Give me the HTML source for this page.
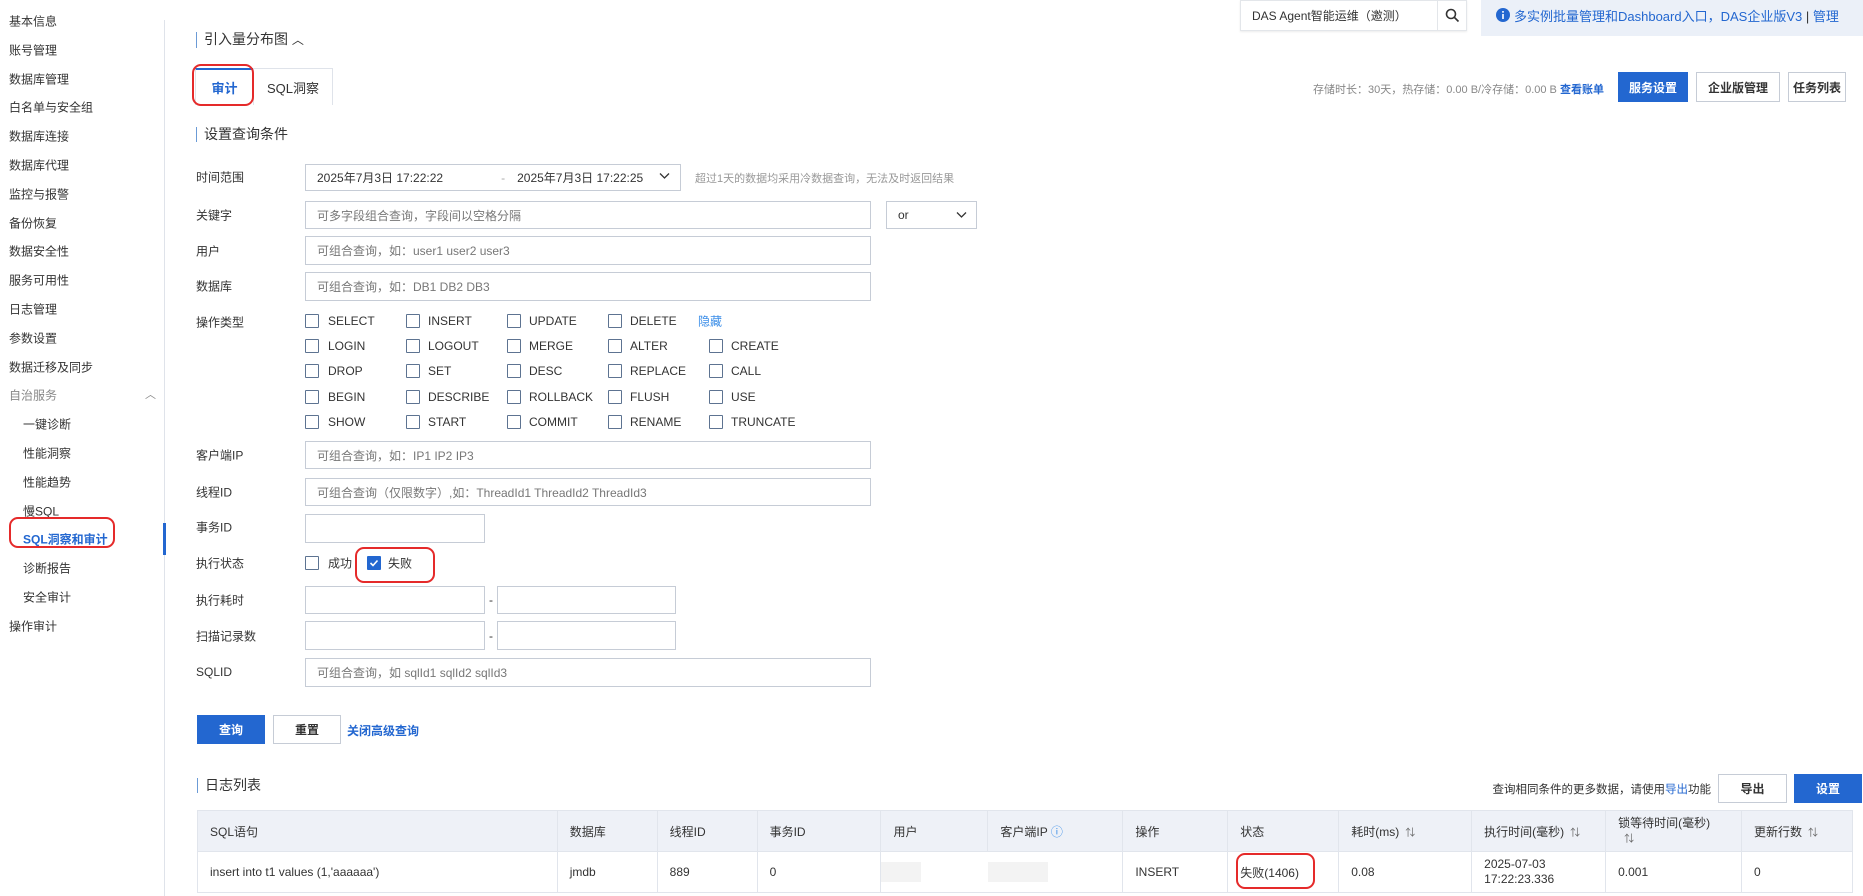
<!DOCTYPE html>
<html><head><meta charset="utf-8">
<style>
*{box-sizing:border-box;margin:0;padding:0}
body{width:1863px;height:896px;overflow:hidden;background:#fff;font-family:"Liberation Sans","Noto Sans CJK SC",sans-serif;font-size:12px;color:#333;position:relative}
.a{position:absolute;white-space:nowrap}
.sb{position:absolute;left:9px;font-size:12px;color:#333;transform:translateY(-50%)}
.sub{left:23px}
.lbl{position:absolute;left:196px;transform:translateY(-50%);font-size:12px;color:#333}
.inp{position:absolute;border:1px solid #c6ccd6;background:#fff;color:#777;padding-left:11px;display:flex;align-items:center;font-size:12px}
.cb{position:absolute;width:14px;height:14px;border:1px solid #5d7391;border-radius:1px;background:#fff}
.cbt{position:absolute;font-size:12px;color:#333;transform:translateY(-50%)}
.hd{position:absolute;font-size:14px;color:#333;border-left:1px solid #6b9bd6;padding-left:7px;line-height:15px}
.btn{position:absolute;display:flex;align-items:center;justify-content:center;font-size:12px;border:1px solid #c6ccd6;background:#fff;color:#333}
.bb{background:#2367d0;border-color:#2367d0;color:#fff;font-weight:bold}
.red{position:absolute;border:2px solid #e52a2a;border-radius:9px}
table{position:absolute;left:197px;top:810px;border-collapse:collapse;width:1656px;font-size:12px}
td,th{border:1px solid #e1e5ec;text-align:left;font-weight:normal;padding:0 12px;color:#333}
th{background:#eef1f7;height:41px}
td{height:41px}
.so{color:#666;font-size:10px;margin-left:6px}
</style></head><body>
<div class="a" style="left:164px;top:20px;width:1px;height:876px;background:#dfe3ea"></div>
<div class="sb" style="top:21px">基本信息</div>
<div class="sb" style="top:50px">账号管理</div>
<div class="sb" style="top:79px">数据库管理</div>
<div class="sb" style="top:107px">白名单与安全组</div>
<div class="sb" style="top:136px">数据库连接</div>
<div class="sb" style="top:165px">数据库代理</div>
<div class="sb" style="top:194px">监控与报警</div>
<div class="sb" style="top:223px">备份恢复</div>
<div class="sb" style="top:251px">数据安全性</div>
<div class="sb" style="top:280px">服务可用性</div>
<div class="sb" style="top:309px">日志管理</div>
<div class="sb" style="top:338px">参数设置</div>
<div class="sb" style="top:367px">数据迁移及同步</div>
<div class="sb" style="top:395px;color:#888">自治服务</div>
<div class="a" style="left:145px;top:386px;color:#888;font-size:11px">︿</div>
<div class="sb sub" style="top:424px">一键诊断</div>
<div class="sb sub" style="top:453px">性能洞察</div>
<div class="sb sub" style="top:482px">性能趋势</div>
<div class="sb sub" style="top:511px">慢SQL</div>
<div class="sb sub" style="top:539px;color:#2367d0;font-weight:bold">SQL洞察和审计</div>
<div class="sb sub" style="top:568px">诊断报告</div>
<div class="sb sub" style="top:597px">安全审计</div>
<div class="sb" style="top:626px">操作审计</div>
<div class="a" style="left:163px;top:523px;width:3px;height:32px;background:#2367d0"></div>
<div class="red" style="left:9px;top:517px;width:106px;height:31px"></div>

<!-- top right -->
<div class="inp" style="left:1240px;top:0;width:227px;height:31px;color:#333;border-color:#e3e6ea;box-shadow:0 1px 2px rgba(0,0,0,.08)">DAS Agent智能运维（邀测）</div>
<div class="a" style="left:1437px;top:0;width:1px;height:31px;background:#e3e6ea"></div>
<svg class="a" style="left:1445px;top:8px" width="15" height="15" viewBox="0 0 15 15"><circle cx="6" cy="6" r="4.5" fill="none" stroke="#333" stroke-width="1.6"/><path d="M9.5 9.5L13.5 13.5" stroke="#333" stroke-width="1.6"/></svg>
<div class="a" style="left:1481px;top:0;width:382px;height:36px;background:#ebf0f8"></div>
<svg class="a" style="left:1496px;top:8px" width="14" height="14" viewBox="0 0 14 14"><circle cx="7" cy="7" r="7" fill="#2367d0"/><rect x="6.2" y="6" width="1.6" height="5" fill="#fff"/><rect x="6.2" y="3" width="1.6" height="1.7" fill="#fff"/></svg>
<div class="a" style="left:1514px;top:6px;color:#2367d0;font-size:13px">多实例批量管理和Dashboard入口，DAS企业版V3 <span style="color:#333">|</span> 管理</div>

<div class="hd" style="left:196px;top:32px">引入量分布图 <span style="font-size:12px">︿</span></div>
<!-- tabs -->
<div class="a" style="left:195px;top:68px;width:58px;height:37px;border-top:2px solid #2367d0;border-left:1px solid #dfe3ea;background:#fff;display:flex;align-items:center;justify-content:center;color:#2367d0;font-weight:bold;font-size:13px">审计</div>
<div class="a" style="left:253px;top:68px;width:80px;height:37px;border:1px solid #dfe3ea;border-bottom:none;display:flex;align-items:center;justify-content:center;font-size:13px">SQL洞察</div>
<div class="red" style="left:192px;top:64px;width:62px;height:42px"></div>
<div class="a" style="left:1313px;top:81px;color:#888;font-size:11px">存储时长：30天，热存储：0.00 B/冷存储：0.00 B <span style="color:#2367d0;font-weight:bold">查看账单</span></div>
<div class="btn bb" style="left:1618px;top:72px;width:70px;height:30px">服务设置</div>
<div class="btn" style="left:1696px;top:72px;width:84px;height:30px;font-weight:bold">企业版管理</div>
<div class="btn" style="left:1788px;top:72px;width:58px;height:30px;font-weight:bold">任务列表</div>

<div class="hd" style="left:196px;top:127px">设置查询条件</div>

<div class="lbl" style="top:177px">时间范围</div>
<div class="inp" style="left:305px;top:164px;width:376px;height:27px;color:#333">2025年7月3日 17:22:22<span style="margin-left:58px;color:#aaa">-</span><span style="margin-left:12px">2025年7月3日 17:22:25</span></div>
<svg class="a" style="left:659px;top:172px" width="11" height="8" viewBox="0 0 11 8"><path d="M1 1.5L5.5 6L10 1.5" fill="none" stroke="#333" stroke-width="1.3"/></svg>
<div class="a" style="left:695px;top:170px;color:#999;font-size:11px">超过1天的数据均采用冷数据查询，无法及时返回结果</div>

<div class="lbl" style="top:215px">关键字</div>
<div class="inp" style="left:305px;top:201px;width:566px;height:28px">可多字段组合查询，字段间以空格分隔</div>
<div class="inp" style="left:886px;top:201px;width:91px;height:28px;color:#333">or</div>
<svg class="a" style="left:956px;top:211px" width="11" height="8" viewBox="0 0 11 8"><path d="M1 1.5L5.5 6L10 1.5" fill="none" stroke="#333" stroke-width="1.3"/></svg>

<div class="lbl" style="top:251px">用户</div>
<div class="inp" style="left:305px;top:236px;width:566px;height:29px">可组合查询，如：user1 user2 user3</div>
<div class="lbl" style="top:286px">数据库</div>
<div class="inp" style="left:305px;top:272px;width:566px;height:29px">可组合查询，如：DB1 DB2 DB3</div>

<div class="lbl" style="top:322px">操作类型</div>
<div class="cb" style="left:305px;top:314px"></div><div class="cbt" style="left:328px;top:321px">SELECT</div>
<div class="cb" style="left:406px;top:314px"></div><div class="cbt" style="left:428px;top:321px">INSERT</div>
<div class="cb" style="left:507px;top:314px"></div><div class="cbt" style="left:529px;top:321px">UPDATE</div>
<div class="cb" style="left:608px;top:314px"></div><div class="cbt" style="left:630px;top:321px">DELETE</div>
<div class="cbt" style="left:698px;top:321px;color:#3b8ee8">隐藏</div>
<div class="cb" style="left:305px;top:339px"></div><div class="cbt" style="left:328px;top:346px">LOGIN</div>
<div class="cb" style="left:406px;top:339px"></div><div class="cbt" style="left:428px;top:346px">LOGOUT</div>
<div class="cb" style="left:507px;top:339px"></div><div class="cbt" style="left:529px;top:346px">MERGE</div>
<div class="cb" style="left:608px;top:339px"></div><div class="cbt" style="left:630px;top:346px">ALTER</div>
<div class="cb" style="left:709px;top:339px"></div><div class="cbt" style="left:731px;top:346px">CREATE</div>
<div class="cb" style="left:305px;top:364px"></div><div class="cbt" style="left:328px;top:371px">DROP</div>
<div class="cb" style="left:406px;top:364px"></div><div class="cbt" style="left:428px;top:371px">SET</div>
<div class="cb" style="left:507px;top:364px"></div><div class="cbt" style="left:529px;top:371px">DESC</div>
<div class="cb" style="left:608px;top:364px"></div><div class="cbt" style="left:630px;top:371px">REPLACE</div>
<div class="cb" style="left:709px;top:364px"></div><div class="cbt" style="left:731px;top:371px">CALL</div>
<div class="cb" style="left:305px;top:390px"></div><div class="cbt" style="left:328px;top:397px">BEGIN</div>
<div class="cb" style="left:406px;top:390px"></div><div class="cbt" style="left:428px;top:397px">DESCRIBE</div>
<div class="cb" style="left:507px;top:390px"></div><div class="cbt" style="left:529px;top:397px">ROLLBACK</div>
<div class="cb" style="left:608px;top:390px"></div><div class="cbt" style="left:630px;top:397px">FLUSH</div>
<div class="cb" style="left:709px;top:390px"></div><div class="cbt" style="left:731px;top:397px">USE</div>
<div class="cb" style="left:305px;top:415px"></div><div class="cbt" style="left:328px;top:422px">SHOW</div>
<div class="cb" style="left:406px;top:415px"></div><div class="cbt" style="left:428px;top:422px">START</div>
<div class="cb" style="left:507px;top:415px"></div><div class="cbt" style="left:529px;top:422px">COMMIT</div>
<div class="cb" style="left:608px;top:415px"></div><div class="cbt" style="left:630px;top:422px">RENAME</div>
<div class="cb" style="left:709px;top:415px"></div><div class="cbt" style="left:731px;top:422px">TRUNCATE</div>

<div class="lbl" style="top:455px">客户端IP</div>
<div class="inp" style="left:305px;top:441px;width:566px;height:28px">可组合查询，如：IP1 IP2 IP3</div>
<div class="lbl" style="top:492px">线程ID</div>
<div class="inp" style="left:305px;top:478px;width:566px;height:28px">可组合查询（仅限数字）,如：ThreadId1 ThreadId2 ThreadId3</div>
<div class="lbl" style="top:527px">事务ID</div>
<div class="inp" style="left:305px;top:514px;width:180px;height:29px"></div>

<div class="lbl" style="top:563px">执行状态</div>
<div class="cb" style="left:305px;top:556px"></div><div class="cbt" style="left:328px;top:563px">成功</div>
<div class="cb" style="left:367px;top:556px;background:#2367d0;border-color:#2367d0"></div>
<svg class="a" style="left:369px;top:558px" width="10" height="10" viewBox="0 0 10 10"><path d="M1.5 5L4 7.5L8.5 2.5" fill="none" stroke="#fff" stroke-width="1.6"/></svg>
<div class="cbt" style="left:388px;top:563px">失败</div>
<div class="red" style="left:355px;top:547px;width:80px;height:36px"></div>

<div class="lbl" style="top:600px">执行耗时</div>
<div class="inp" style="left:305px;top:586px;width:180px;height:28px"></div>
<div class="a" style="left:489px;top:593px">-</div>
<div class="inp" style="left:497px;top:586px;width:179px;height:28px"></div>
<div class="lbl" style="top:636px">扫描记录数</div>
<div class="inp" style="left:305px;top:621px;width:180px;height:29px"></div>
<div class="a" style="left:489px;top:629px">-</div>
<div class="inp" style="left:497px;top:621px;width:179px;height:29px"></div>
<div class="lbl" style="top:672px">SQLID</div>
<div class="inp" style="left:305px;top:658px;width:566px;height:29px">可组合查询，如 sqlId1 sqlId2 sqlId3</div>

<div class="btn bb" style="left:197px;top:715px;width:68px;height:29px">查询</div>
<div class="btn" style="left:273px;top:715px;width:68px;height:29px;font-weight:bold">重置</div>
<div class="a" style="left:347px;top:722px;color:#2367d0;font-weight:bold">关闭高级查询</div>

<div class="hd" style="left:197px;top:778px">日志列表</div>
<div class="a" style="right:152px;top:781px;font-size:11.5px">查询相同条件的更多数据，请使用<span style="color:#2367d0">导出</span>功能</div>
<div class="btn" style="left:1718px;top:774px;width:69px;height:29px;font-weight:bold">导出</div>
<div class="btn bb" style="left:1794px;top:774px;width:68px;height:29px">设置</div>

<table>
<colgroup><col style="width:360px"><col style="width:100px"><col style="width:100px"><col style="width:124px"><col style="width:107px"><col style="width:135px"><col style="width:105px"><col style="width:111px"><col style="width:133px"><col style="width:134px"><col style="width:136px"><col style="width:111px"></colgroup>
<tr><th>SQL语句</th><th>数据库</th><th>线程ID</th><th>事务ID</th><th>用户</th><th>客户端IP <span style="color:#3b8ee8">ⓘ</span></th><th>操作</th><th>状态</th><th>耗时(ms)<span class="so">⇅</span></th><th>执行时间(毫秒)<span class="so">⇅</span></th><th style="line-height:15px">锁等待时间(毫秒)<br><span class="so">⇅</span></th><th>更新行数<span class="so">⇅</span></th></tr>
<tr><td>insert into t1 values (1,'aaaaaa')</td><td>jmdb</td><td>889</td><td>0</td><td style="border-right-color:#fff"><div style="width:40px;height:20px;background:#f3f3f3;margin-left:-12px"></div></td><td><div style="width:60px;height:20px;background:#f3f3f3;margin-left:-12px"></div></td><td>INSERT</td><td>失败(1406)</td><td>0.08</td><td style="line-height:15px">2025-07-03<br>17:22:23.336</td><td>0.001</td><td>0</td></tr>
</table>
<div class="red" style="left:1236px;top:853px;width:79px;height:36px"></div>
</body></html>
